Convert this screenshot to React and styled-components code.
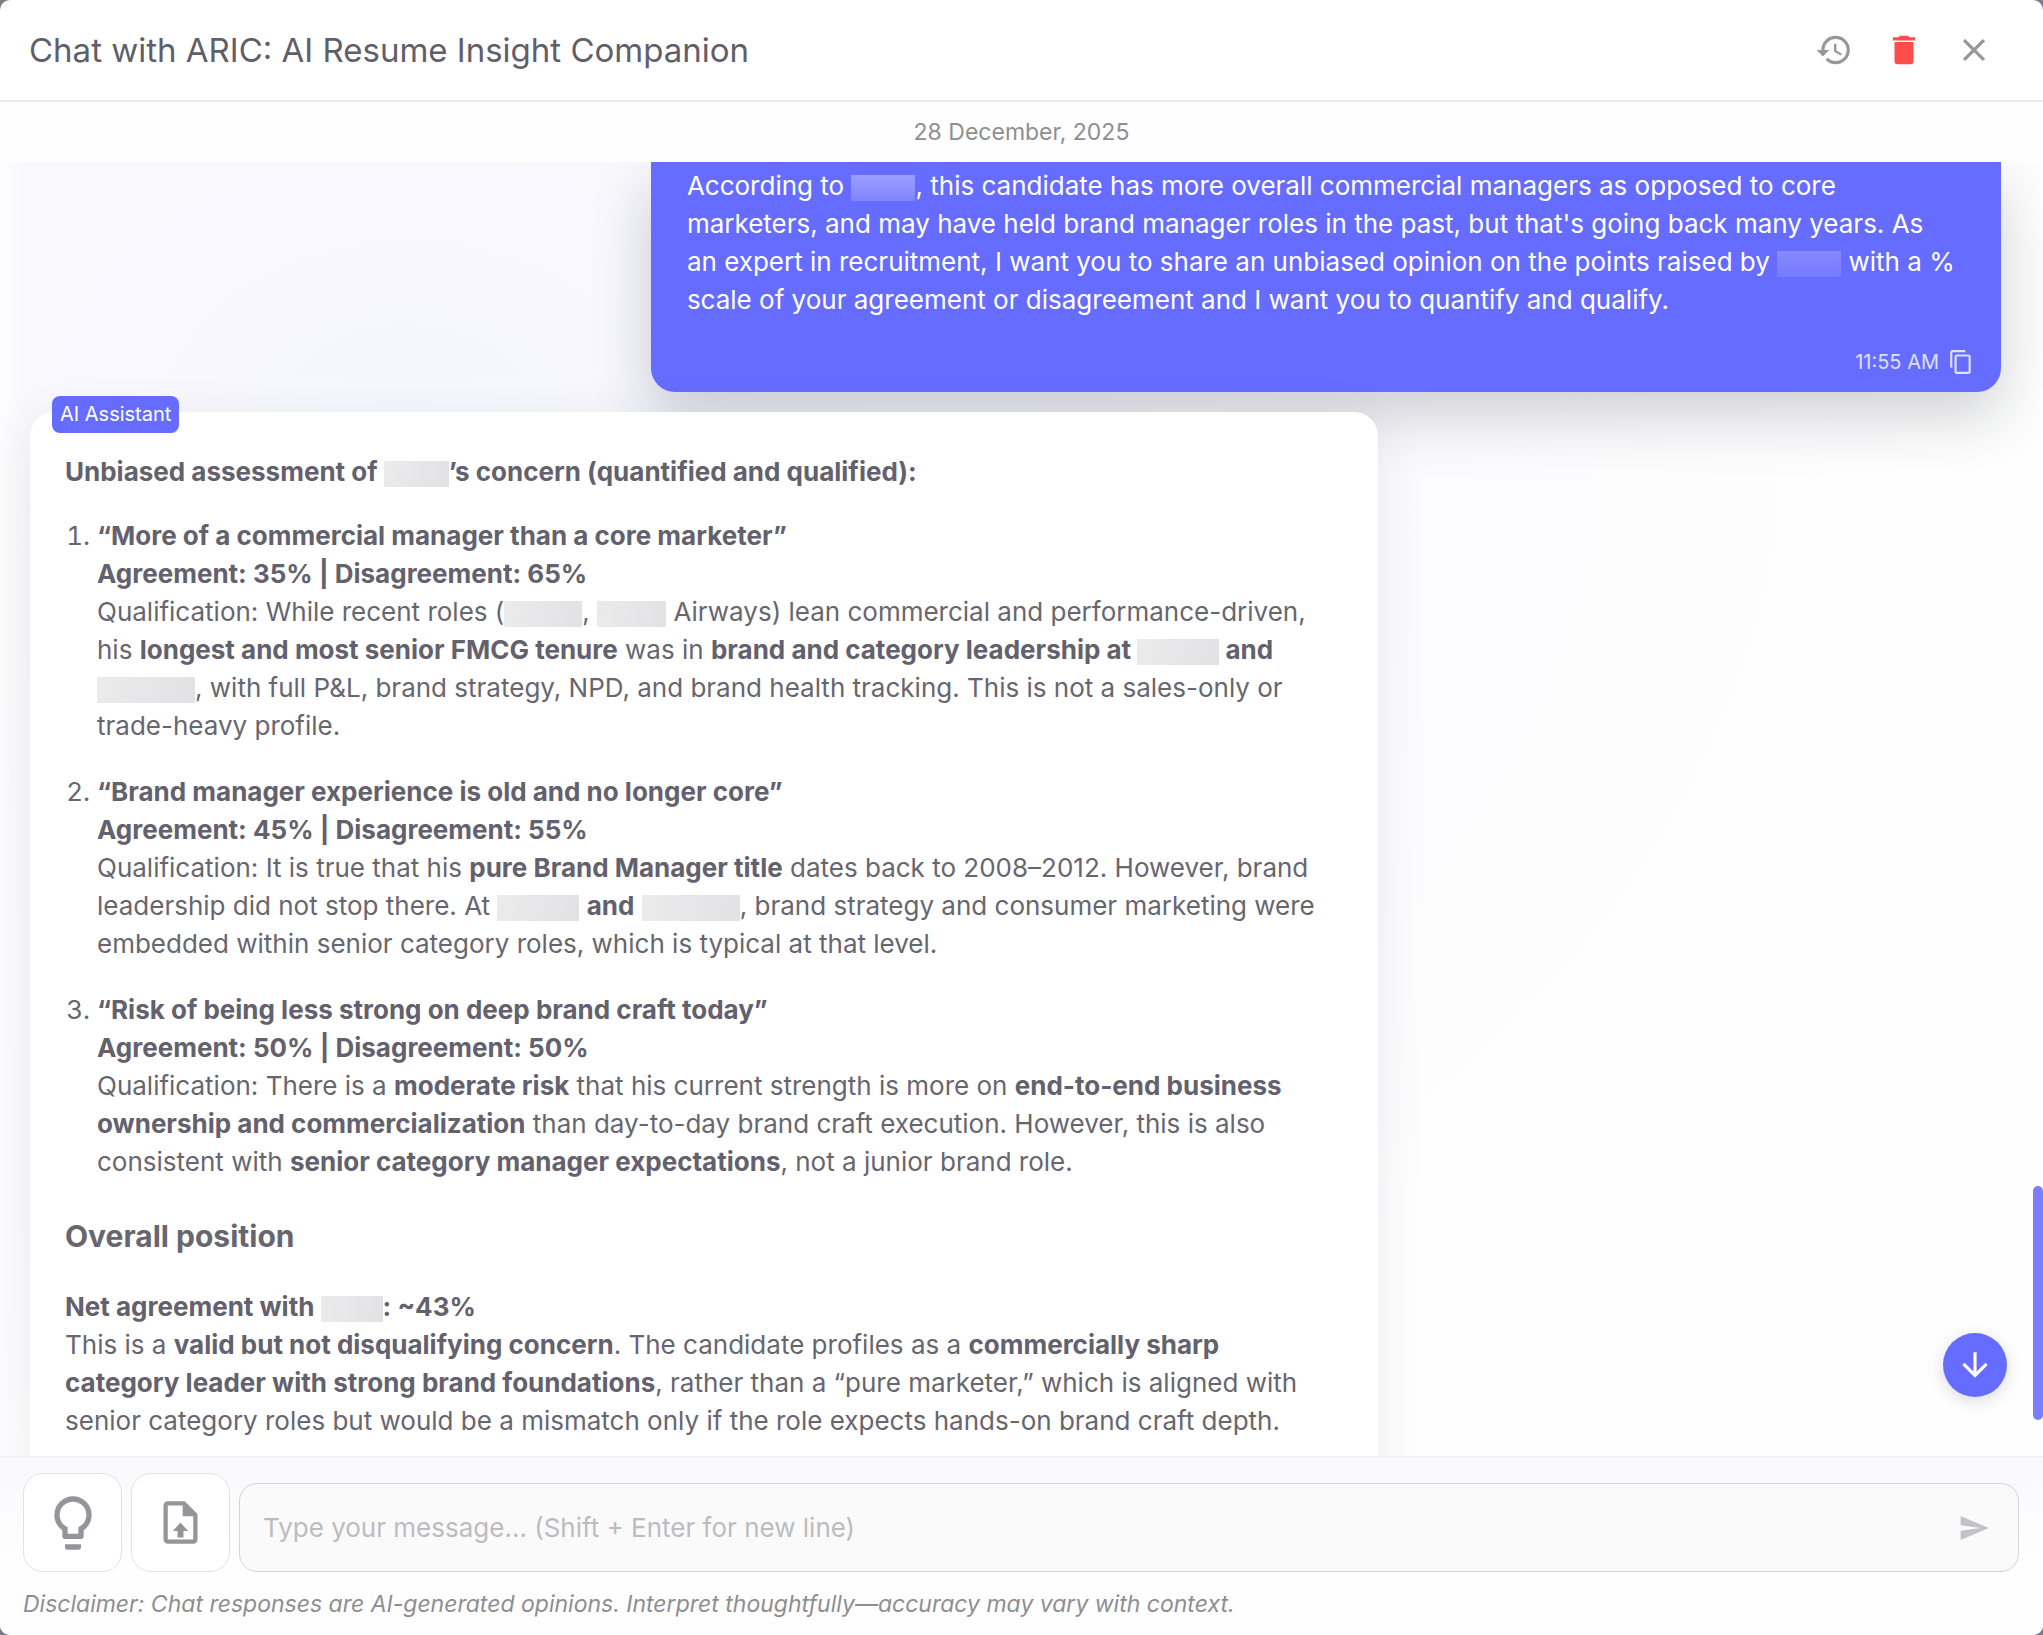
import React from "react";
import styled, { createGlobalStyle } from "styled-components";

const GlobalStyle = createGlobalStyle`
  *, *::before, *::after { box-sizing: border-box; }
  body {
    margin: 0;
    background: #7d7c88;
    font-family: Inter, "Liberation Sans", sans-serif;
    color: #67666f;
  }
  button, textarea { font: inherit; color: inherit; }
  button { cursor: pointer; }
`;

const Dialog = styled.main`
  display: flex;
  flex-direction: column;
  height: 100vh;
  background: #fff;
  border-radius: 10px;
  overflow: hidden;
`;

const Header = styled.header`
  display: flex;
  align-items: center;
  justify-content: space-between;
  height: 102px;
  padding: 0 49px 0 29px;
  border-bottom: 2px solid #e9e9ee;
`;

const Title = styled.h1`
  margin: 0;
  font-size: 33px;
  line-height: 40px;
  font-weight: 400;
  color: #5f5e69;
`;

const Actions = styled.div`
  display: flex;
  gap: 30px;
`;

const IconButton = styled.button`
  display: grid;
  place-items: center;
  width: ${(p) => p.$size || 40}px;
  height: 40px;
  padding: 0;
  border: 0;
  background: none;
  color: ${(p) => p.$color || "#97979a"};
`;

const Svg = styled.svg`
  display: block;
  width: ${(p) => p.$size}px;
  height: ${(p) => p.$size}px;
  fill: currentColor;
`;

const DateBar = styled.div`
  height: 60px;
  line-height: 60px;
  text-align: center;
  font-size: 23px;
  color: #8e8e91;
  background: #fefefe;
`;

const ThreadFrame = styled.section`
  position: relative;
  flex: 1;
  min-height: 0;
  overflow: hidden;
  background:
    linear-gradient(90deg, #fdfdfe, rgba(253, 253, 254, 0) 30px),
    radial-gradient(ellipse 1500px 1100px at 20% 20%, #f6f6fd, #fefefe);
`;

const Thread = styled.div`
  display: flex;
  flex-direction: column;
  gap: 20px;
  padding: 0 42px 0 30px;
`;

const Bubble = styled.article`
  position: relative;
  width: 68.4%;
  font-size: 26px;
  line-height: 38px;
`;

const UserBubble = styled(Bubble)`
  align-self: flex-end;
  width: 68.5%;
  padding: 5px 27px 10px 36px;
  border-radius: 0 0 24px 24px;
  background: #666cff;
  color: #fff;
  box-shadow: 0 24px 60px rgba(20, 24, 40, 0.2);
`;

const AssistantBubble = styled(Bubble)`
  align-self: flex-start;
  padding: 41px 50px 80px 35px;
  border-radius: 24px;
  background: #fff;
  box-shadow: 0 10px 50px rgba(40, 44, 70, 0.09);
`;

const Badge = styled.span`
  position: absolute;
  top: -16px;
  left: 22px;
  padding: 0 8px;
  border-radius: 8px;
  background: #666cff;
  color: #fff;
  font-size: 20px;
  line-height: 37px;
`;

const Paragraph = styled.p`
  margin: 0 ${(p) => p.$inset || 0}px ${(p) => p.$after || 0}px 0;
`;

const Findings = styled.ol`
  display: flex;
  flex-direction: column;
  gap: 28px;
  margin: 0;
  padding-left: 32px;
`;

const Subheading = styled.h2`
  margin: 35px 0 32px;
  font-size: 30px;
  line-height: 40px;
  font-weight: 700;
`;

const Strong = styled.strong`
  font-weight: 700;
  color: #63616d;
`;

const Redacted = styled.span`
  display: inline-block;
  vertical-align: middle;
  width: ${(p) => p.$width}px;
  height: 26px;
  background: ${(p) => (p.$light ? "linear-gradient(#9a9eff, #8084ff)" : "linear-gradient(100deg, #ebebec, #e2e2e4)")};
  opacity: ${(p) => (p.$faint ? 0.6 : 1)};
`;

const Meta = styled.footer`
  display: flex;
  align-items: center;
  justify-content: flex-end;
  gap: 9px;
  margin-top: 23px;
  font-size: 20px;
  color: #dfe0ff;
`;

const ScrollThumb = styled.div`
  position: absolute;
  right: 0;
  bottom: 36px;
  width: 10px;
  height: 234px;
  border-radius: 5px;
  background: #7b7fff;
`;

const JumpButton = styled.button`
  position: absolute;
  right: 36px;
  bottom: 59px;
  display: grid;
  place-items: center;
  width: 64px;
  height: 64px;
  padding: 0;
  border: 0;
  border-radius: 50%;
  background: #666cff;
  color: #fff;
  box-shadow: 0 4px 16px rgba(40, 44, 70, 0.16);
`;

const Composer = styled.form`
  padding: 15px 24px 15px 23px;
  border-top: 2px solid #f1f1f4;
  background: linear-gradient(#f9f9fc, #fefefe 60%);
`;

const ComposerRow = styled.div`
  display: flex;
  align-items: flex-end;
  gap: 9px;
`;

const ToolButton = styled.button`
  display: grid;
  place-items: center;
  width: 99px;
  height: 99px;
  padding: 0;
  border: 1px solid #e2e2e6;
  border-radius: 20px;
  background: #fff;
  color: #95949b;
`;

const Field = styled.div`
  flex: 1;
  display: flex;
  align-items: center;
  height: 89px;
  padding: 0 24px 0 23px;
  border: 1px solid #d4d4d9;
  border-radius: 18px;
  background: #fafafb;
`;

const MessageInput = styled.textarea`
  flex: 1;
  height: 38px;
  padding: 0;
  border: 0;
  outline: 0;
  resize: none;
  background: none;
  font-size: 26px;
  line-height: 38px;
  &::placeholder { color: #bcbcc0; opacity: 1; }
`;

const Disclaimer = styled.p`
  margin: 16px 0 0;
  font-size: 23px;
  line-height: 32px;
  font-style: italic;
  color: #8e8e91;
`;

const PATHS = {
  history:
    "M13.5 8H12v5l4.28 2.54.72-1.21-3.5-2.08zM13 3a9 9 0 0 0-9 9H1l3.96 4.03L9 12H6a7 7 0 1 1 7 7c-1.93 0-3.68-.79-4.94-2.06l-1.42 1.42A8.9 8.9 0 0 0 13 21a9 9 0 0 0 0-18",
  trash: "M19 4h-3.5l-1-1h-5l-1 1H5v2h14M6 19a2 2 0 0 0 2 2h8a2 2 0 0 0 2-2V7H6z",
  close:
    "M19 6.41 17.59 5 12 10.59 6.41 5 5 6.41 10.59 12 5 17.59 6.41 19 12 13.41 17.59 19 19 17.59 13.41 12z",
  copy:
    "M16 1H4c-1.1 0-2 .9-2 2v14h2V3h12zm3 4H8c-1.1 0-2 .9-2 2v14c0 1.1.9 2 2 2h11c1.1 0 2-.9 2-2V7c0-1.1-.9-2-2-2m0 16H8V7h11z",
  down: "m20 12-1.41-1.41L13 16.17V4h-2v12.17l-5.58-5.59L4 12l8 8z",
  bulb:
    "M12 2a7 7 0 0 1 7 7c0 2.38-1.19 4.47-3 5.74V17a1 1 0 0 1-1 1H9a1 1 0 0 1-1-1v-2.26C6.19 13.47 5 11.38 5 9a7 7 0 0 1 7-7M9 21v-1h6v1a1 1 0 0 1-1 1h-4a1 1 0 0 1-1-1m3-17a5 5 0 0 0-5 5c0 2.05 1.23 3.81 3 4.58V16h4v-2.42c1.77-.77 3-2.53 3-4.58a5 5 0 0 0-5-5",
  upload:
    "M14 2H6a2 2 0 0 0-2 2v16a2 2 0 0 0 2 2h12a2 2 0 0 0 2-2V8zm4 18H6V4h7v5h5zm-7.400-1v-3h-2.200L12 12l3.600 4h-2.200v3z",
  send: "M2.010 21 23 12 2.010 3 2 10l15 2-15 2z",
};

const Icon = ({ name, size }) => (
  <Svg $size={size} viewBox="0 0 24 24" aria-hidden="true">
    <path d={PATHS[name]} />
  </Svg>
);

export default function App() {
  return (
    <>
      <GlobalStyle />
      <Dialog>
        <Header>
          <Title>Chat with ARIC: AI Resume Insight Companion</Title>
          <Actions>
            <IconButton type="button" aria-label="Chat history"><Icon name="history" size={38} /></IconButton>
            <IconButton type="button" aria-label="Delete chat" $color="#ff4d49"><Icon name="trash" size={38} /></IconButton>
            <IconButton type="button" aria-label="Close"><Icon name="close" size={38} /></IconButton>
          </Actions>
        </Header>
        <DateBar>28 December, 2025</DateBar>

        <ThreadFrame aria-label="Conversation">
          <Thread>
            <UserBubble>
              <Paragraph $inset={16}>
                According to <Redacted $light $width={64} />, this candidate has more overall commercial managers as
                opposed to core marketers, and may have held brand manager roles in the past, but that's going back
                many years. As an expert in recruitment, I want you to share an unbiased opinion on the points raised
                by <Redacted $light $faint $width={64} /> with a % scale of your agreement or disagreement and I want
                you to quantify and qualify.
              </Paragraph>
              <Meta>
                <time>11:55 AM</time>
                <IconButton type="button" aria-label="Copy message" $size={26} $color="#dfe0ff"><Icon name="copy" size={26} /></IconButton>
              </Meta>
            </UserBubble>

            <AssistantBubble>
              <Badge>AI Assistant</Badge>
              <Paragraph $after={26}>
                <Strong>Unbiased assessment of <Redacted $width={65} />’s concern (quantified and qualified):</Strong>
              </Paragraph>
              <Findings>
                <li>
                  <Strong>“More of a commercial manager than a core marketer”</Strong><br />
                  <Strong>Agreement: 35% | Disagreement: 65%</Strong><br />
                  Qualification: While recent roles (<Redacted $width={78} />, <Redacted $width={69} /> Airways) lean
                  commercial and performance-driven, his <Strong>longest and most senior FMCG tenure</Strong> was
                  in <Strong>brand and category leadership at <Redacted $width={82} /> and <Redacted $width={98} /></Strong>,
                  with full P&amp;L, brand strategy, NPD, and brand health tracking. This is not a sales-only or
                  trade-heavy profile.
                </li>
                <li>
                  <Strong>“Brand manager experience is old and no longer core”</Strong><br />
                  <Strong>Agreement: 45% | Disagreement: 55%</Strong><br />
                  Qualification: It is true that his <Strong>pure Brand Manager title</Strong> dates back to 2008–2012.
                  However, brand leadership did not stop there. At <Redacted $width={82} /> <Strong>and</Strong>{" "}
                  <Redacted $width={98} />, brand strategy and consumer marketing were embedded within senior category
                  roles, which is typical at that level.
                </li>
                <li>
                  <Strong>“Risk of being less strong on deep brand craft today”</Strong><br />
                  <Strong>Agreement: 50% | Disagreement: 50%</Strong><br />
                  Qualification: There is a <Strong>moderate risk</Strong> that his current strength is more
                  on <Strong>end-to-end business ownership and commercialization</Strong> than day-to-day brand craft
                  execution. However, this is also consistent
                  with <Strong>senior category manager expectations</Strong>, not a junior brand role.
                </li>
              </Findings>
              <Subheading>Overall position</Subheading>
              <Paragraph>
                <Strong>Net agreement with <Redacted $width={62} />: ~43%</Strong><br />
                This is a <Strong>valid but not disqualifying concern</Strong>. The candidate profiles as
                a <Strong>commercially sharp category leader with strong brand foundations</Strong>, rather than a
                “pure marketer,” which is aligned with senior category roles but would be a mismatch only if the role
                expects hands-on brand craft depth.
              </Paragraph>
            </AssistantBubble>
          </Thread>
          <ScrollThumb />
          <JumpButton type="button" aria-label="Scroll to latest"><Icon name="down" size={38} /></JumpButton>
        </ThreadFrame>

        <Composer onSubmit={(e) => e.preventDefault()}>
          <ComposerRow>
            <ToolButton type="button" aria-label="Suggestions"><Icon name="bulb" size={64} /></ToolButton>
            <ToolButton type="button" aria-label="Upload file"><Icon name="upload" size={51} /></ToolButton>
            <Field>
              <MessageInput aria-label="Message" rows={1} placeholder="Type your message... (Shift + Enter for new line)" />
              <IconButton type="submit" aria-label="Send" $color="#c3c3c6"><Icon name="send" size={32} /></IconButton>
            </Field>
          </ComposerRow>
          <Disclaimer>
            Disclaimer: Chat responses are AI-generated opinions. Interpret thoughtfully—accuracy may vary with context.
          </Disclaimer>
        </Composer>
      </Dialog>
    </>
  );
}
